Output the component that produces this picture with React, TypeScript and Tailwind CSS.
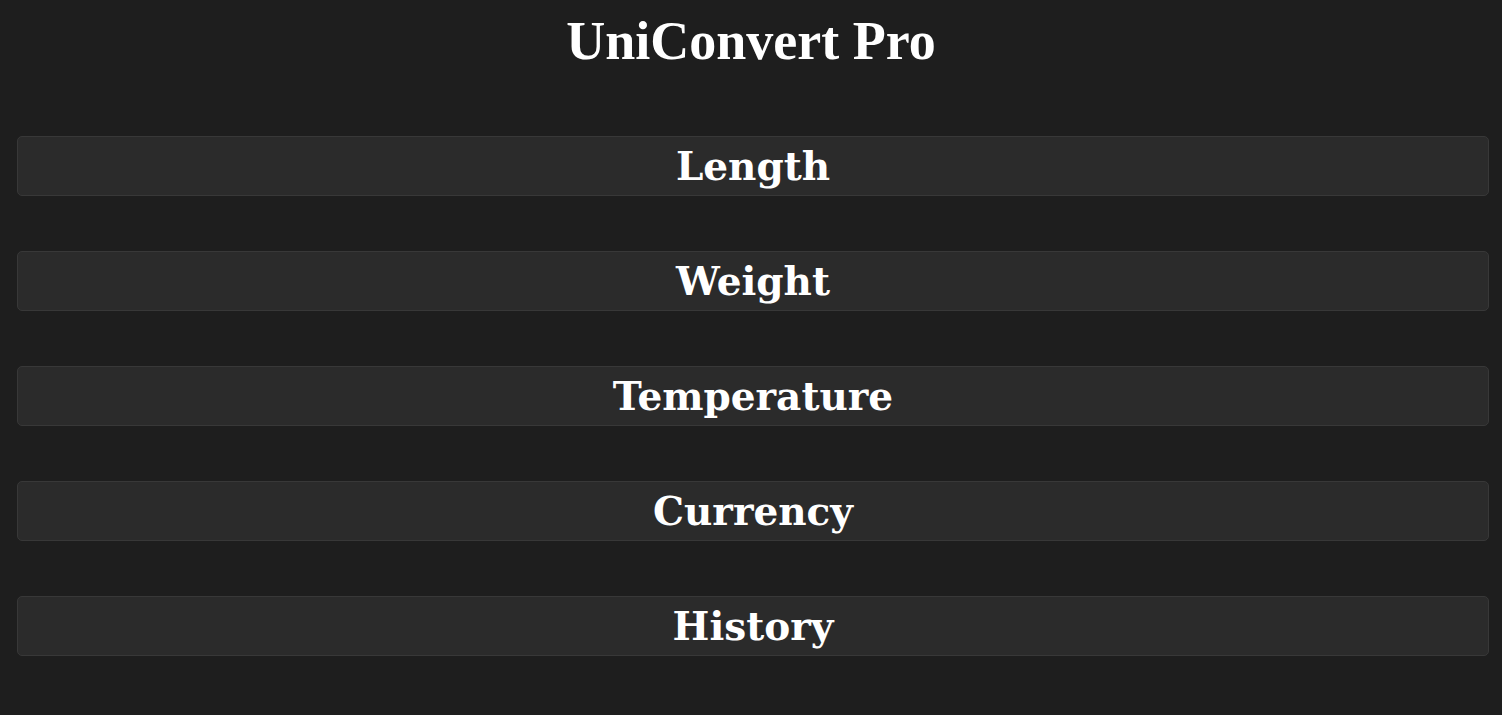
import React from "react";

const sections = ["Length", "Weight", "Temperature", "Currency", "History"];

export default function App() {
    return (
        <div className="min-h-screen w-full bg-[#1e1e1e] text-white">
            <h1 className="pt-[10px] text-center text-[54px] leading-[62px] font-black font-['Liberation_Serif',serif]">
                UniConvert Pro
            </h1>
            <div className="mt-[64px] flex flex-col gap-[55px] pl-[17px] pb-[58px]">
                {sections.map((s) => (
                    <button
                        key={s}
                        className="flex h-[60px] w-[1472px] items-center justify-center rounded-[5px] border border-[#383838] bg-[#2b2b2b] text-[39px] font-bold font-['DejaVu_Serif',serif]"
                    >
                        {s}
                    </button>
                ))}
            </div>
        </div>
    );
}
